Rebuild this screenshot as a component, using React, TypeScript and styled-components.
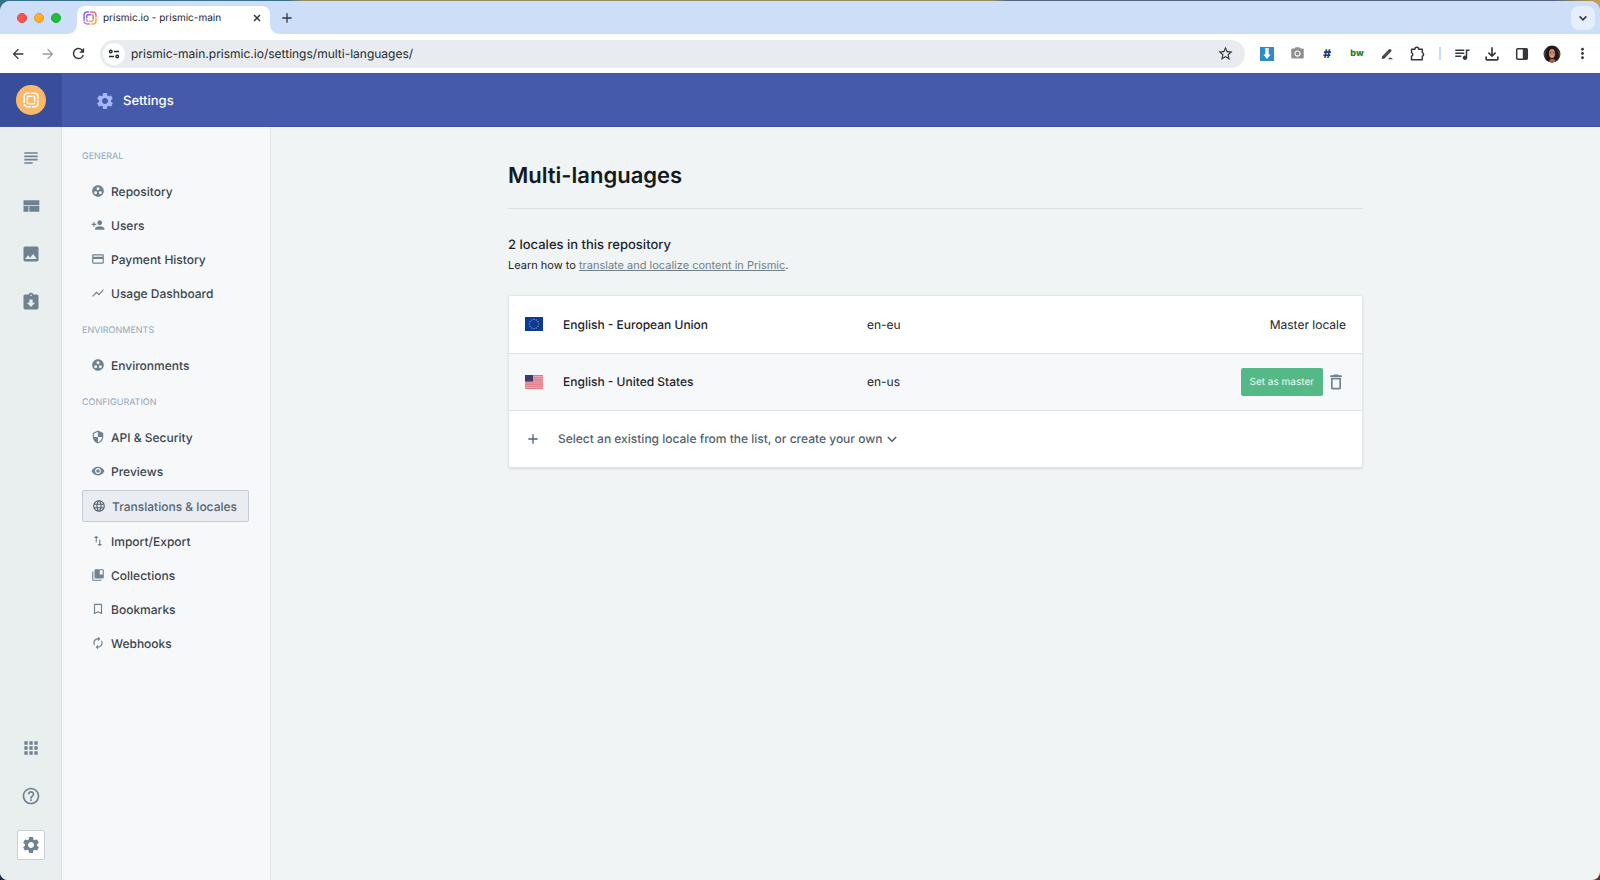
import React from "react";
import styled, { createGlobalStyle, css } from "styled-components";
import {
  MdAdd, MdArrowBack, MdArrowForward, MdAssignmentReturned, MdApps, MdAutorenew, MdBookmarkBorder,
  MdCollectionsBookmark, MdDeleteOutline, MdGroupWork, MdHelpOutline,
  MdImage, MdImportExport, MdLanguage, MdMoreVert,
  MdOutlineFileDownload, MdPersonAdd, MdPhotoCamera, MdQueueMusic, MdRefresh, MdSecurity,
  MdSettings, MdShowChart, MdStarBorder, MdSubject, MdVisibility, MdPayment,
} from "react-icons/md";

const GlobalStyle = createGlobalStyle`
  *, *::before, *::after { box-sizing: border-box; }
  html { background: #16324f; }
  body { margin: 0; font-family: Inter, "Liberation Sans", sans-serif; font-size: 12px; color: #1d232b; text-rendering: geometricPrecision; }
  button, input { font: inherit; color: inherit; text-rendering: inherit; }
  h1, h2, p, ul { margin: 0; padding: 0; }
  ul { list-style: none; }
  svg { display: block; flex: none; }
`;

const Desktop = styled.div`
  min-height: 100vh;
  padding-top: 1px;
  display: flex;
  background: linear-gradient(90deg, #3b7089 0 18%, #9a8f68 19% 62%, #4f6780 63% 97%, #c9a052);
`;

const Browser = styled.div`
  flex: 1;
  min-width: 0;
  display: flex;
  flex-direction: column;
  border-radius: 10px 10px 8px 8px;
  overflow: hidden;
  background: #f0f4f5;
`;

const Corners = styled.div`
  flex: 1;
  min-width: 0;
  display: flex;
  background: linear-gradient(90deg, #1b2f4d 50%, #6e2a22 50%) bottom / 100% 20px no-repeat;
`;

const IconButton = styled.button<{ $size?: number; $tone?: string }>`
  display: flex;
  align-items: center;
  justify-content: center;
  flex: none;
  width: ${(p) => p.$size ?? 20}px;
  height: ${(p) => p.$size ?? 20}px;
  padding: 0;
  border: 0;
  background: none;
  color: ${(p) => p.$tone ?? "#34383c"};
`;

const TabStrip = styled.div`
  height: 33px;
  flex: none;
  display: flex;
  align-items: center;
  padding: 0 5px 0 17px;
  background: #cddff8;
`;

const Lights = styled.div`
  display: flex;
  gap: 7px;
  margin-right: 16px;
`;

const Light = styled.span<{ $color: string; $edge: string }>`
  width: 10px;
  height: 10px;
  border-radius: 50%;
  background: ${(p) => p.$color};
  border: 1px solid ${(p) => p.$edge};
`;

const Tab = styled.div`
  position: relative;
  align-self: flex-end;
  width: 193px;
  height: 28px;
  padding: 0 4px 5px 6px;
  display: flex;
  align-items: center;
  gap: 6px;
  border-radius: 8px 8px 0 0;
  background: #fff;
  font-size: 10px;

  &::before, &::after {
    content: "";
    position: absolute;
    bottom: 0;
    width: 8px;
    height: 8px;
  }
  &::before { right: 100%; background: radial-gradient(circle at 0 0, transparent 7px, #fff 8px); }
  &::after { left: 100%; background: radial-gradient(circle at 100% 0, transparent 7px, #fff 8px); }
`;

const TabTitle = styled.span`
  flex: 1;
  white-space: nowrap;
`;

const NewTab = styled(IconButton)`
  margin-left: 7px;
`;

const TabSearch = styled(IconButton)`
  margin-left: auto;
  border-radius: 8px;
  background: #e5effc;
`;

const Toolbar = styled.div`
  height: 39px;
  flex: none;
  display: flex;
  align-items: center;
  gap: 10px;
  padding: 0 8px;
  background: #fff;
`;

const Nav = styled.div`
  display: flex;
  gap: 10px;
`;

const AddressBar = styled.div`
  flex: 1;
  min-width: 0;
  height: 28px;
  display: flex;
  align-items: center;
  gap: 6px;
  padding: 0 8px 0 3px;
  margin: 0 2px;
  border-radius: 14px;
  background: #e8ecf1;
`;

const SiteInfo = styled(IconButton)`
  border-radius: 50%;
  background: #fff;
`;

const Address = styled.input`
  flex: 1;
  min-width: 0;
  padding: 0;
  border: 0;
  outline: 0;
  background: none;
  font-size: 12px;
  color: #25282c;
`;

const Extensions = styled.div`
  display: flex;
  align-items: center;
  gap: 10px;
`;

const Divider = styled.span`
  width: 2px;
  height: 13px;
  margin: 0 1px 0 2px;
  background: #c6dcf8;
`;

const ExtText = styled.span<{ $tone: string; $size: number; $italic?: boolean }>`
  font-size: ${(p) => p.$size}px;
  font-weight: 800;
  font-style: ${(p) => (p.$italic ? "italic" : "normal")};
  color: ${(p) => p.$tone};
`;

const AppHeader = styled.header`
  height: 54px;
  flex: none;
  display: flex;
  align-items: stretch;
  background: #465aab;
  border-bottom: 1px solid #3f51a0;
`;

const LogoCell = styled.a`
  width: 62px;
  display: flex;
  align-items: center;
  justify-content: center;
  background: #394d9d;
`;

const LogoDisc = styled.span`
  width: 30px;
  height: 30px;
  display: flex;
  align-items: center;
  justify-content: center;
  border-radius: 50%;
  background: #fbb968;
  color: #fff;
`;

const HeaderTitle = styled.div`
  display: flex;
  align-items: center;
  gap: 8px;
  padding: 2px 0 0 33px;
  font-size: 13px;
  font-weight: 500;
  color: #fff;

  svg { color: #a5b6fb; }
`;

const Body = styled.div`
  flex: 1;
  display: flex;
`;

const Rail = styled.nav`
  width: 62px;
  flex: none;
  display: flex;
  flex-direction: column;
  align-items: center;
  gap: 20px;
  padding: 17px 0 20px;
  background: #e9eeee;
  border-right: 1px solid #dde2e6;
`;

const RailLink = styled.a<{ $active?: boolean }>`
  width: 28px;
  height: 28px;
  display: flex;
  align-items: center;
  justify-content: center;
  color: #6f8291;
  ${(p) => p.$active && css`
    height: 30px;
    border: 1px solid #c9d0d5;
    border-radius: 2px;
    background: #fff;
  `}
`;

const RailSpacer = styled.div`
  flex: 1;
`;

const Side = styled.nav`
  width: 209px;
  flex: none;
  padding: 24px 21px 24px 20px;
  background: #f6f8fa;
  border-right: 1px solid #e1e6ea;
`;

const SideHeading = styled.h2`
  height: 12px;
  margin-bottom: 12px;
  font-size: 9px;
  line-height: 12px;
  font-weight: 400;
  text-transform: uppercase;
  color: #93a6b9;
`;

const SideList = styled.ul`
  display: flex;
  flex-direction: column;
  gap: 2px;
  margin-bottom: 16px;
`;

const SideLink = styled.a<{ $active?: boolean }>`
  height: 32px;
  display: flex;
  align-items: center;
  gap: 6px;
  padding: 0 9px 0 9px;
  font-size: 12px;
  font-weight: 500;
  color: #3b444d;
  text-decoration: none;
  white-space: nowrap;

  svg { color: #6f8291; }

  ${(p) => p.$active && css`
    margin: 1px 0;
    border: 1px solid #c5ccd5;
    border-radius: 2px;
    background: #e9edf2;
    color: #566571;
    svg { color: #566571; }
  `}
`;

const Main = styled.main`
  flex: 1;
  min-width: 0;
  padding: 33px 24px;
`;

const Content = styled.div`
  max-width: 855px;
  margin: 0 auto;
`;

const PageTitle = styled.h1`
  padding-bottom: 16px;
  border-bottom: 1px solid #dbe0e4;
  font-size: 22px;
  line-height: 32px;
  font-weight: 600;
  color: #151a21;
`;

const Summary = styled.h2`
  margin-top: 26px;
  font-size: 13px;
  line-height: 20px;
  font-weight: 500;
`;

const Hint = styled.p`
  font-size: 11px;
  line-height: 20px;

  a { color: #6f7f89; }
`;

const Card = styled.div`
  margin-top: 20px;
  border: 1px solid #e1e6e9;
  border-radius: 3px;
  background: #fff;
  box-shadow: 0 1px 2px rgba(60, 80, 100, 0.15);
  overflow: hidden;
`;

const LocaleTable = styled.table`
  width: 100%;
  table-layout: fixed;
  border-collapse: collapse;
`;

const LocaleRow = styled.tr<{ $shaded?: boolean }>`
  height: 57px;
  background: ${(p) => (p.$shaded ? "#f6f8fa" : "#fff")};
  border-bottom: 1px solid #dce1e6;
`;

const Cell = styled.td<{ $width?: number; $strong?: boolean }>`
  width: ${(p) => (p.$width ? `${p.$width}px` : "auto")};
  padding: 0;
  font-weight: ${(p) => (p.$strong ? 500 : 400)};
`;

const FlagCell = styled(Cell)`
  padding-left: 16px;
`;

const ActionCell = styled(Cell)`
  padding-right: 16px;
`;

const Actions = styled.div`
  display: flex;
  align-items: center;
  justify-content: flex-end;
  gap: 3px;
`;

const MasterButton = styled.button`
  height: 28px;
  padding: 0 9px;
  border: 0;
  border-radius: 2px;
  background: #54b986;
  color: #e9faf1;
  font-size: 10px;
`;

const AddLocale = styled.button`
  width: 100%;
  height: 56px;
  display: flex;
  align-items: center;
  padding: 0 16px;
  border: 0;
  background: none;
  font-size: 12px;
  font-weight: 500;
  color: #53616e;
`;

const AddLabel = styled.span`
  margin: 0 5px 0 17px;
`;

const PrismicMark = ({ size, colors, weight }: { size: number; colors: string[]; weight: number }) => (
  <svg width={size} height={size} viewBox="0 0 16 16" fill="none" strokeWidth={weight} aria-hidden="true">
    <path d="M1.200 11V4.500A3.300 3.300 0 0 1 4.500 1.200H7" stroke={colors[0]} />
    <path d="M8 1.200H11.500A3.300 3.300 0 0 1 14.800 4.500V7" stroke={colors[1]} />
    <path d="M14.800 8V11.500A3.300 3.300 0 0 1 11.500 14.800H9" stroke={colors[2]} />
    <path d="M8 14.800H4.500A3.300 3.300 0 0 1 1.300 12" stroke={colors[3]} />
    <path d="M4.300 8.400V5.600A1.300 1.300 0 0 1 5.600 4.300H9.600" stroke={colors[0]} />
    <path d="M10.400 4.300A1.300 1.300 0 0 1 11.700 5.600V9.600" stroke={colors[1]} />
    <path d="M11.700 10.400A1.300 1.300 0 0 1 10.400 11.700H6.400" stroke={colors[2]} />
    <path d="M5.600 11.700A1.300 1.300 0 0 1 4.300 10.400V9.200" stroke={colors[3]} />
  </svg>
);

const CloseIcon = () => (
  <svg width="8" height="8" viewBox="0 0 8 8" stroke="currentColor" strokeWidth="1.500" aria-hidden="true">
    <path d="M1 1l6 6M7 1L1 7" />
  </svg>
);

const Chevron = ({ size, weight }: { size: number; weight: number }) => (
  <svg width={size} height={size} viewBox="0 0 10 10" fill="none" stroke="currentColor" strokeWidth={weight} aria-hidden="true">
    <path d="M.8 3L5 7.200 9.200 3" />
  </svg>
);

const LayoutIcon = () => (
  <svg width="20" height="20" viewBox="0 0 24 24" fill="currentColor" aria-hidden="true">
    <path d="M3 19h6v-7H3v7zm7 0h12v-7H10v7zM3 5v6h19V5H3z" />
  </svg>
);

const PuzzleIcon = () => (
  <svg width="15" height="15" viewBox="0 0 15 15" fill="none" stroke="currentColor" strokeWidth="1.500" strokeLinejoin="round" aria-hidden="true">
    <path d="M1.500 3.200h3.400a1.900 1.900 0 0 1 3.800 0h3.600v3.400a1.900 1.900 0 0 1 0 3.600v3.600H1.500v-3.600a1.900 1.900 0 0 0 0-3.600z" />
  </svg>
);

const SiteInfoIcon = () => (
  <svg width="12" height="12" viewBox="0 0 12 12" fill="none" stroke="#25282c" strokeWidth="1.400" aria-hidden="true">
    <circle cx="2.800" cy="3.500" r="1.300" /><path d="M6 3.500h5M1 8.500h5" /><circle cx="9.200" cy="8.500" r="1.300" />
  </svg>
);

const DownloaderIcon = () => (
  <svg width="14" height="14" viewBox="0 0 14 14" aria-hidden="true">
    <path d="M0 0h14v14H0z" fill="#2f8bc4" />
    <path d="M5.300 1h3.400v6.500h2L7 12 3.300 7.500h2z" fill="#fff" /><path d="M7 1v4" stroke="#b8d9ee" />
  </svg>
);

const PenIcon = () => (
  <svg width="12" height="12" viewBox="0 0 12 12" aria-hidden="true">
    <path d="M1 8.500L8 1.200Q9 .6 10 1.400T10.300 3.300L3.500 10.500.8 11z" fill="#3f4447" />
    <path d="M3.500 8.300L8 3.500" stroke="#8a8e91" strokeWidth=".5" /><path d="M7 11.200l1.500-1.500h1.800L12 11.200z" fill="#3f4447" />
  </svg>
);

const SidePanelIcon = () => (
  <svg width="14" height="14" viewBox="0 0 14 14" aria-hidden="true">
    <rect x="1.700" y="1.700" width="10.600" height="10.600" rx="1" fill="none" stroke="#34383c" strokeWidth="1.500" />
    <path d="M7.800 2h4.500v10H7.800z" fill="#34383c" />
  </svg>
);

const Avatar = () => (
  <svg width="18" height="18" viewBox="0 0 18 18" aria-hidden="true">
    <clipPath id="face"><circle cx="9" cy="9" r="8.500" /></clipPath>
    <g clipPath="url(#face)">
      <path d="M0 0h18v18H0z" fill="#4a4443" />
      <path d="M2.500 18V8Q3 1 9 1t6.500 7v10z" fill="#231718" />
      <path d="M5 18l2.500-4h3.500l3.500 4z" fill="#b9573f" />
      <ellipse cx="9" cy="8.600" rx="3" ry="4.600" fill="#c98a6c" />
      <path d="M6.900 7.600h1.400M9.800 7.600h1.400" stroke="#4a2a22" strokeWidth=".7" />
      <path d="M7.800 11q1.200.8 2.400 0" stroke="#e9c5b8" strokeWidth=".7" fill="none" />
    </g>
  </svg>
);

const EuFlag = () => (
  <svg width="18" height="14" viewBox="0 0 18 14" role="img" aria-label="European Union">
    <path d="M0 0h18v14H0z" fill="#0b3b94" />
    {Array.from({ length: 12 }, (_, i) => (
      <circle key={i} cx={9 + 4.600 * Math.sin((i * Math.PI) / 6)} cy={7 - 4.600 * Math.cos((i * Math.PI) / 6)} r=".6" fill="#b9b98a" />
    ))}
  </svg>
);

const UsFlag = () => (
  <svg width="18" height="14" viewBox="0 0 18 14" role="img" aria-label="United States">
    <path d="M0 0h18v14H0z" fill="#f0a9b2" />
    {[0, 1, 2, 3, 4, 5, 6].map((i) => <path key={i} d={`M0 ${i * 2.150}h18v1.100H0z`} fill="#e07583" />)}
    <path d="M0 0h8v6.500H0z" fill="#3a3c6c" />
  </svg>
);

const railTop = [
  { label: "Documents", icon: <MdSubject size={20} /> },
  { label: "Custom types", icon: <LayoutIcon /> },
  { label: "Media", icon: <MdImage size={20} /> },
  { label: "Releases", icon: <MdAssignmentReturned size={20} /> },
];

const sections: { title: string; items: { label: string; Icon: typeof MdAdd; active?: boolean }[] }[] = [
  { title: "General", items: [
    { label: "Repository", Icon: MdGroupWork },
    { label: "Users", Icon: MdPersonAdd },
    { label: "Payment History", Icon: MdPayment },
    { label: "Usage Dashboard", Icon: MdShowChart },
  ] },
  { title: "Environments", items: [{ label: "Environments", Icon: MdGroupWork }] },
  { title: "Configuration", items: [
    { label: "API & Security", Icon: MdSecurity },
    { label: "Previews", Icon: MdVisibility },
    { label: "Translations & locales", Icon: MdLanguage, active: true },
    { label: "Import/Export", Icon: MdImportExport },
    { label: "Collections", Icon: MdCollectionsBookmark },
    { label: "Bookmarks", Icon: MdBookmarkBorder },
    { label: "Webhooks", Icon: MdAutorenew },
  ] },
];

const white = ["#fff", "#fff", "#fff", "#fff"];
const brand = ["#8b62e8", "#ee6f70", "#f6a94c", "#c77be0"];

export default function App() {
  return (
    <Desktop>
      <GlobalStyle />
      <Corners>
        <Browser>
          <TabStrip>
            <Lights>
              <Light $color="#fb5450" $edge="#e5403e" />
              <Light $color="#fbb02f" $edge="#df9a20" />
              <Light $color="#22bd3a" $edge="#15a52c" />
            </Lights>
            <Tab>
              <PrismicMark size={14} colors={brand} weight={1.7} />
              <TabTitle>prismic.io - prismic-main</TabTitle>
              <IconButton $size={18} aria-label="Close tab"><CloseIcon /></IconButton>
            </Tab>
            <NewTab aria-label="New tab"><MdAdd size={16} /></NewTab>
            <TabSearch $size={24} aria-label="Search tabs"><Chevron size={8} weight={2} /></TabSearch>
          </TabStrip>
          <Toolbar>
            <Nav>
              <IconButton aria-label="Back"><MdArrowBack size={16} /></IconButton>
              <IconButton aria-label="Forward" $tone="#9a9da0"><MdArrowForward size={16} /></IconButton>
              <IconButton aria-label="Reload"><MdRefresh size={17} /></IconButton>
            </Nav>
            <AddressBar>
              <SiteInfo $size={22} aria-label="Site information"><SiteInfoIcon /></SiteInfo>
              <Address aria-label="Address" defaultValue="prismic-main.prismic.io/settings/multi-languages/" />
              <IconButton $size={24} aria-label="Bookmark this page"><MdStarBorder size={17} /></IconButton>
            </AddressBar>
            <Extensions>
              <IconButton aria-label="Downloader"><DownloaderIcon /></IconButton>
              <IconButton aria-label="Screenshot" $tone="#8d8f91"><MdPhotoCamera size={15} /></IconButton>
              <IconButton aria-label="Headings"><ExtText $tone="#23366e" $size={12} $italic>#</ExtText></IconButton>
              <IconButton aria-label="Builtwith"><ExtText $tone="#12821d" $size={9}>bw</ExtText></IconButton>
              <IconButton aria-label="Annotate"><PenIcon /></IconButton>
              <IconButton aria-label="Extensions"><PuzzleIcon /></IconButton>
              <Divider />
              <IconButton aria-label="Media controls"><MdQueueMusic size={18} /></IconButton>
              <IconButton aria-label="Downloads"><MdOutlineFileDownload size={20} /></IconButton>
              <IconButton aria-label="Side panel"><SidePanelIcon /></IconButton>
              <IconButton aria-label="Profile"><Avatar /></IconButton>
              <IconButton aria-label="Menu"><MdMoreVert size={17} /></IconButton>
            </Extensions>
          </Toolbar>
          <AppHeader>
            <LogoCell href="#" aria-label="Prismic"><LogoDisc><PrismicMark size={16} colors={white} weight={1.6} /></LogoDisc></LogoCell>
            <HeaderTitle><MdSettings size={20} />Settings</HeaderTitle>
          </AppHeader>
          <Body>
            <Rail aria-label="Main">
              {railTop.map(({ label, icon }) => (
                <RailLink key={label} href="#" aria-label={label}>{icon}</RailLink>
              ))}
              <RailSpacer />
              <RailLink href="#" aria-label="Apps"><MdApps size={20} /></RailLink>
              <RailLink href="#" aria-label="Help"><MdHelpOutline size={20} /></RailLink>
              <RailLink href="#" aria-label="Settings" $active><MdSettings size={20} /></RailLink>
            </Rail>
            <Side aria-label="Settings">
              {sections.map((s) => (
                <React.Fragment key={s.title}>
                  <SideHeading>{s.title}</SideHeading>
                  <SideList>
                    {s.items.map(({ label, Icon, active }) => (
                      <li key={label}><SideLink href="#" $active={active}><Icon size={14} />{label}</SideLink></li>
                    ))}
                  </SideList>
                </React.Fragment>
              ))}
            </Side>
            <Main>
              <Content>
                <PageTitle>Multi-languages</PageTitle>
                <Summary>2 locales in this repository</Summary>
                <Hint>Learn how to <a href="#">translate and localize content in Prismic</a>.</Hint>
                <Card>
                  <LocaleTable>
                    <tbody>
                      <LocaleRow>
                        <FlagCell $width={54}><EuFlag /></FlagCell>
                        <Cell $width={304} $strong>English - European Union</Cell>
                        <Cell>en-eu</Cell>
                        <ActionCell><Actions>Master locale</Actions></ActionCell>
                      </LocaleRow>
                      <LocaleRow $shaded>
                        <FlagCell><UsFlag /></FlagCell>
                        <Cell $strong>English - United States</Cell>
                        <Cell>en-us</Cell>
                        <ActionCell>
                          <Actions>
                            <MasterButton>Set as master</MasterButton>
                            <IconButton aria-label="Delete locale" $tone="#6f8291"><MdDeleteOutline size={20} /></IconButton>
                          </Actions>
                        </ActionCell>
                      </LocaleRow>
                    </tbody>
                  </LocaleTable>
                  <AddLocale>
                    <MdAdd size={16} />
                    <AddLabel>Select an existing locale from the list, or create your own</AddLabel>
                    <Chevron size={10} weight={1.6} />
                  </AddLocale>
                </Card>
              </Content>
            </Main>
          </Body>
        </Browser>
      </Corners>
    </Desktop>
  );
}
